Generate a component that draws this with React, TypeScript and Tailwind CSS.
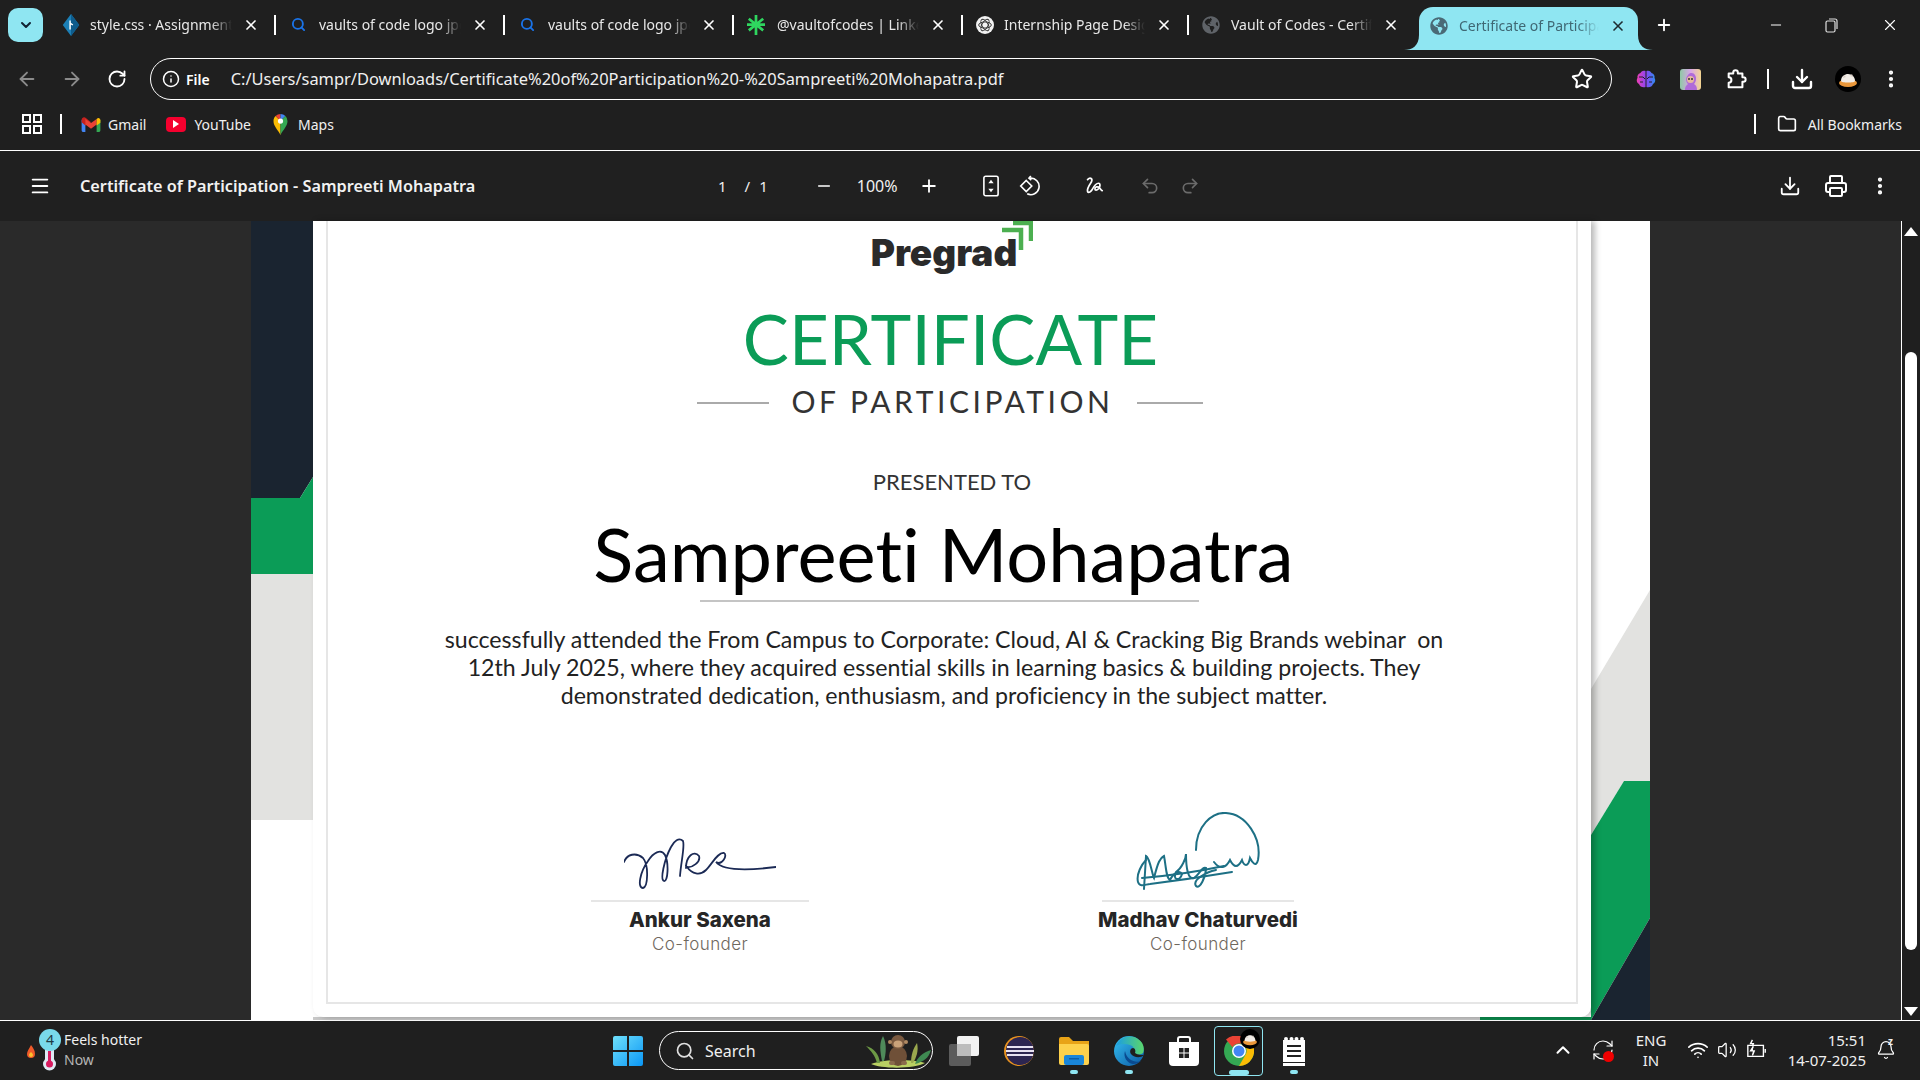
import { ArrowLeft, ArrowRight, Bell, ChevronDown, ChevronUp, Download, EllipsisVertical, Folder, Info, Menu, Minus, Plus, Printer, Redo2, RefreshCw, RotateCw, Search, Star, Undo2, Volume2, Wifi, X } from "lucide-react";
import { FaGlobeAmericas } from "react-icons/fa";

const ui = "font-['Noto_Sans',sans-serif]";

function DiamondIcon() {
  return (
    <svg viewBox="0 0 18 24" className="h-[22px] w-[18px]">
      <path d="M9 0l9 12-9 12-9-12z" fill="#1c7fb6" />
      <path d="M9 0l9 12-9 12z" fill="#0e5c8c" />
      <path d="M8 7v10M8 10l3 2" stroke="#fff" strokeWidth="1.6" fill="none" />
    </svg>
  );
}

function SparkIcon() {
  return (
    <svg viewBox="0 0 20 22" className="h-[22px] w-[18px]">
      <path d="M10 0v22M2 4l16 13M18 4L2 17M0 10.500h20" stroke="#2fd65f" strokeWidth="3" />
    </svg>
  );
}

function GptIcon() {
  return (
    <svg viewBox="0 0 20 20" className="h-5 w-5">
      <circle cx="10" cy="10" r="10" fill="#f2f2f2" />
      <g fill="none" stroke="#333" strokeWidth="1.1">
        <ellipse cx="10" cy="10" rx="7" ry="3.400" />
        <ellipse cx="10" cy="10" rx="7" ry="3.400" transform="rotate(60 10 10)" />
        <ellipse cx="10" cy="10" rx="7" ry="3.400" transform="rotate(120 10 10)" />
      </g>
    </svg>
  );
}

function Tab({ icon, title, textWidth, gapClass }: { icon: React.ReactNode; title: string; textWidth: string; gapClass: string }) {
  return (
    <div className="flex h-full items-center">
      <div className={`flex w-[18px] justify-center ${gapClass}`}>{icon}</div>
      <div className={`overflow-hidden whitespace-nowrap text-[14px] text-[#e8e8e8] [mask-image:linear-gradient(to_right,black_85%,transparent)] ${textWidth}`}>{title}</div>
      <X className="ml-[11px] h-4 w-4 text-white" strokeWidth={2.5} />
      <div className="ml-[15px] mr-[13px] h-[20px] w-[2px] bg-white" />
    </div>
  );
}

function GmailIcon() {
  return (
    <svg viewBox="0 0 20 16" className="h-[15px] w-[20px]">
      <path d="M0 3v11c0 1 .7 2 2 2h2V6z" fill="#4285f4" />
      <path d="M20 3v11c0 1-.7 2-2 2h-2V6z" fill="#34a853" />
      <path d="M0 3c0-2.500 2.800-3.500 4.500-2L10 5.500 4 9 0 5.500z" fill="#c5221f" />
      <path d="M4 2l6 4.500L16 2v6l-6 4.500L4 8z" fill="#ea4335" />
      <path d="M16 2c2-2 4-.5 4 1.500V6l-4 3z" fill="#fbbc04" />
    </svg>
  );
}

function YoutubeIcon() {
  return (
    <div className="flex h-[15px] w-[20px] items-center justify-center rounded-[4px] bg-[#f5002e]">
      <div className="h-0 w-0 border-y-[4px] border-l-[6px] border-y-transparent border-l-white" />
    </div>
  );
}

function MapsIcon() {
  return (
    <svg viewBox="0 0 16 24" className="h-[21px] w-[15px]">
      <path d="M8 24C5 18 0 14 0 8c0-2 .8-4 2.400-5.600L8 8z" fill="#fbbc04" />
      <path d="M2.400 2.400A8 8 0 018 0v8z" fill="#ea4335" />
      <path d="M8 0a8 8 0 015.600 2.400L8 8z" fill="#4285f4" />
      <path d="M13.600 2.400A8 8 0 0116 8c0 6-5 10-8 16V8z" fill="#34a853" />
      <circle cx="8" cy="8" r="3" fill="#fff" />
    </svg>
  );
}

function BrainIcon() {
  return (
    <svg viewBox="0 0 20 20" className="h-5 w-5">
      <defs>
        <linearGradient id="brainFill" x1="0" x2="1">
          <stop offset="0" stopColor="#ef3fb2" />
          <stop offset="0.5" stopColor="#8b45f5" />
          <stop offset="1" stopColor="#2f8cf0" />
        </linearGradient>
      </defs>
      <path d="M9.500 2C7 1 5 2.500 4.500 4 2 4.500 1 7 1.500 9 0 11 1 14 3 15c.5 2.500 4 4 6.500 3zM10.500 2C13 1 15 2.500 15.500 4 18 4.500 19 7 18.500 9c1.500 2 .5 5-1.500 6-.5 2.500-4 4-6.500 3z" fill="url(#brainFill)" />
      <path d="M3 8h4l2 2M17 8h-4l-2 2M4 13h3M16 13h-3" stroke="#20202a" strokeWidth="1" fill="none" />
    </svg>
  );
}

function FaceExtIcon() {
  return (
    <svg viewBox="0 0 21 21" className="h-[21px] w-[21px]">
      <defs>
        <linearGradient id="faceBg" x1="0" x2="1">
          <stop offset="0" stopColor="#8fc9a5" />
          <stop offset="0.5" stopColor="#d9a6e8" />
          <stop offset="1" stopColor="#f3d58f" />
        </linearGradient>
      </defs>
      <rect width="21" height="21" rx="3" fill="url(#faceBg)" />
      <path d="M5 21c0-4 2-5 3-6-2-2-3-6 0-9 2-3 6-2 7 0 2 3 1 7-1 9 2 1 3 3 3 6z" fill="#b06ad9" />
      <circle cx="10.500" cy="10.500" r="3.500" fill="#e8b9a0" />
      <circle cx="9" cy="10" r="1" fill="#333" />
      <circle cx="12" cy="10" r="1" fill="#333" />
    </svg>
  );
}

function PuzzleIcon() {
  return (
    <svg viewBox="0 0 24 24" className="h-[22px] w-[22px]" fill="none" stroke="#fff" strokeWidth="2.200" strokeLinejoin="round">
      <path d="M4 6h5V5a2.500 2.500 0 015 0v1h5v4h1a2.500 2.500 0 010 5h-1v6H4v-5a3 3 0 000-6z" />
    </svg>
  );
}

function CatAvatar({ size }: { size: string }) {
  return (
    <svg viewBox="0 0 26 26" className={size}>
      <circle cx="13" cy="13" r="13" fill="#000" />
      <ellipse cx="13" cy="17" rx="9" ry="4" fill="#e8963a" />
      <path d="M6 15c0-5 4-7 7-7 4 0 7 3 7 7 0 2-14 2-14 0z" fill="#f1ece6" />
      <path d="M8 12l1-3 2 2zM15 10l2-2 1 3z" fill="#d9cfc6" />
    </svg>
  );
}

function FitIcon() {
  return (
    <svg viewBox="0 0 18 24" className="h-[22px] w-[16px]" fill="none">
      <rect x="1" y="1" width="16" height="22" rx="2" stroke="#fff" strokeWidth="1.800" />
      <path d="M9 5l3 4H6zM9 19l-3-4h6z" fill="#fff" />
    </svg>
  );
}

function RotateDiamondIcon() {
  return (
    <svg viewBox="0 0 24 24" className="h-[22px] w-[22px]" fill="none" stroke="#fff" strokeWidth="1.800">
      <path d="M9 6l6 6-6 6-6-6z" />
      <path d="M13 3.500a9 9 0 11-3 17" />
      <path d="M14 1l-2 2.500 2.500 2" />
    </svg>
  );
}

function DrawIcon() {
  return (
    <svg viewBox="0 0 24 24" className="h-[22px] w-[22px]" fill="none" stroke="#fff" strokeWidth="1.900" strokeLinecap="round">
      <path d="M5 5c3-3 6-1 4 3-2 3-5 7-4 10 1 2 4 0 5-2 2-4 4-7 7-7 2 0 2 4 0 6-2 2-4 2-4 0s3-3 5-1c2 2 2 3 3 3" />
    </svg>
  );
}

function ColumnSignatureOne() {
  return (
    <svg viewBox="0 0 152 52" className="h-[52px] w-[152px]" fill="none" stroke="#1b2a55" strokeWidth="1.800" strokeLinecap="round">
      <path d="M0 24C3 16 12 14 19 20C25 27 24 49 19 50C13 50 16 34 24 23C29 15 37 10 41 17C45 25 44 44 40 43C36 42 40 22 47 9C50 3 55 -1 59 3C61 8 57 24 56 38" />
      <path d="M62 30C62 18 70 12 75 18C77 24 68 30 63 29C68 36 76 38 82 32C88 26 94 14 100 15C104 17 98 28 92 24C98 32 120 33 152 29" />
    </svg>
  );
}

function ColumnSignatureTwo() {
  return (
    <svg viewBox="0 0 125 78" className="h-[78px] w-[125px]" fill="none" stroke="#1d7085" strokeWidth="2" strokeLinecap="round">
      <path d="M60 38C60 14 76 0 90 1C110 2 126 26 122 48C120 56 116 50 114 46C112 56 108 54 106 48C102 56 98 56 94 48C90 56 84 58 78 50" />
      <path d="M8 77L10 44C14 46 16 62 18 66C22 50 24 46 28 44C30 54 30 66 34 68C38 60 44 58 46 62C44 70 36 68 40 60C46 56 50 46 50 42C50 56 52 68 58 66C64 62 66 54 70 56C70 64 64 78 60 74C56 68 70 60 80 58" />
      <path d="M2 70C0 62 6 52 10 48M2 70C4 76 10 72 14 72C30 70 60 66 96 60" />
      <path d="M6 66C30 64 60 60 88 54" />
    </svg>
  );
}

function Signatory({ signature, name, lineClass }: { signature: React.ReactNode; name: string; lineClass: string }) {
  return (
    <div className="flex w-[240px] flex-col items-center">
      <div className="flex h-[77px] items-end">{signature}</div>
      <div className={`mt-[10px] h-[2px] bg-[#e6e6e6] ${lineClass}`} />
      <div className="mt-[3px] text-[20.500px] leading-[30px] font-extrabold text-[#262626] font-['Inter',sans-serif]">{name}</div>
      <div className="-mt-[1px] text-[17px] leading-[20px] font-light tracking-[0.4px] text-[#6f685e] font-['Inter',sans-serif]">Co-founder</div>
    </div>
  );
}

function Certificate() {
  return (
    <div className="relative h-full w-[1399px] bg-white">
      <svg viewBox="0 0 1399 799" className="absolute inset-0 h-full w-full">
        <polygon points="0,0 62,0 62,256 49,277 0,277" fill="#1a2430" />
        <polygon points="0,277 49,277 62,256 62,353 0,353" fill="#0b9c57" />
        <rect x="0" y="353" width="62" height="246" fill="#e2e2e0" />
        <polygon points="1340,468 1399,369 1399,560 1373,560 1340,614" fill="#e2e2e0" />
        <polygon points="1373,560 1399,560 1399,697 1340,799 1340,614" fill="#0b9c57" />
        <polygon points="1399,697 1399,799 1340,799" fill="#1a2430" />
        <rect x="62" y="796" width="1167" height="3" fill="#c8c8c8" />
        <rect x="1229" y="796" width="111" height="3" fill="#0b8a4c" />
      </svg>
      <div className="relative ml-[62px] h-[796px] w-[1278px] rounded-b-[10px] bg-white px-[13px] pb-[13px] shadow-[4px_0_6px_rgba(0,0,0,0.28)]">
        <div className="flex h-full flex-col items-center border-x-2 border-b-2 border-[#e6e6e6] font-['Lato',sans-serif] [font-variant-ligatures:none]">
          <div className="relative mr-[16px] mt-[9px] text-[37px] leading-[46px] font-black text-[#2a2a2a] font-['Inter',sans-serif]">
            Pregrad
            <svg viewBox="0 0 32 30" className="absolute left-[130px] top-[-9px] h-[30px] w-[32px]" fill="none" stroke="#4caf50" strokeWidth="4.500">
              <path d="M12 2h18v18" />
              <path d="M1 9h19v20" />
            </svg>
          </div>
          <div className="mr-[3px] mt-[21px] text-[69px] leading-[84px] tracking-[0.1px] text-[#0b9c57]">CERTIFICATE</div>
          <div className="mr-[5px] mt-[1px] flex items-center">
            <div className="mt-[3px] h-[2px] w-[72px] bg-[#aaaaaa]" />
            <div className="mx-[23px] text-[30px] leading-[38px] tracking-[3.550px] text-[#333333]">OF PARTICIPATION</div>
            <div className="mt-[3px] h-[2px] w-[66px] bg-[#aaaaaa]" />
          </div>
          <div className="mt-[47px] text-[22px] leading-[30px] text-[#333333]">PRESENTED TO</div>
          <div className="mr-[17px] mt-[14px] text-[74px] leading-[86px] text-black">Sampreeti Mohapatra</div>
          <div className="mr-[6px] mt-[3px] h-[2px] w-[499px] bg-[#c4c4c4]" />
          <div className="mr-[16px] mt-[23px] whitespace-pre text-center text-[23.150px] leading-[28px] text-[#222222]">
            {"successfully attended the From Campus to Corporate: Cloud, AI & Cracking Big Brands webinar  on\n12th July 2025, where they acquired essential skills in learning basics & building projects. They\ndemonstrated dedication, enthusiasm, and proficiency in the subject matter."}
          </div>
          <div className="mt-[104px] flex gap-[258px] pr-[6px]">
            <Signatory signature={<ColumnSignatureOne />} name="Ankur Saxena" lineClass="w-[218px]" />
            <Signatory signature={<ColumnSignatureTwo />} name="Madhav Chaturvedi" lineClass="w-[192px]" />
          </div>
        </div>
      </div>
    </div>
  );
}

function WeatherIcon() {
  return (
    <div className="relative h-[44px] w-[36px]">
      <svg viewBox="0 0 36 44" className="h-full w-full">
        <path d="M5 16c2 3 4 5 4 9a4 4 0 01-8 0c0-3 2-5 4-9z" fill="#ef5a2a" />
        <path d="M5 23c1 1 2 2 2 3a2 2 0 01-4 0c0-1 1-2 2-3z" fill="#fbc02d" />
        <rect x="19" y="12" width="9" height="24" rx="4.500" fill="#dfeaf5" />
        <circle cx="23.500" cy="35" r="6.500" fill="#dfeaf5" />
        <rect x="22" y="22" width="3" height="12" fill="#d81b60" />
        <circle cx="23.500" cy="35" r="3.500" fill="#d81b60" />
      </svg>
      <div className="absolute left-[13px] top-0 flex h-[22px] w-[22px] items-center justify-center rounded-full bg-[#79d9ea] text-[14px] text-[#1f3a44]">4</div>
    </div>
  );
}

function WindowsLogo() {
  return (
    <svg viewBox="0 0 30 30" className="h-[30px] w-[30px]">
      <defs>
        <linearGradient id="winFill" x1="0" y1="0" x2="1" y2="1">
          <stop offset="0" stopColor="#6fe0fb" />
          <stop offset="1" stopColor="#0a96f5" />
        </linearGradient>
      </defs>
      <path d="M0 2a2 2 0 012-2h12v14H0zM16 0h12a2 2 0 012 2v12H16zM0 16h14v14H2a2 2 0 01-2-2zM16 16h14v12a2 2 0 01-2 2H16z" fill="url(#winFill)" />
    </svg>
  );
}

function MonkeyArt() {
  return (
    <svg viewBox="0 0 66 36" className="h-[38px] w-[66px]">
      <path d="M6 31c14-5 40-5 54-1-10 6-44 6-54 1z" fill="#b9cf63" />
      <path d="M12 30C10 22 6 18 1 13c8 2 13 8 14 17z" fill="#6d9a45" />
      <path d="M17 28C15 18 14 10 18 3c4 8 3 18 1 25z" fill="#4f8a5a" />
      <path d="M46 30c0-8 2-14 6-20 2 8-1 15-4 20z" fill="#9aa84e" />
      <path d="M50 31c2-6 8-12 16-14-2 8-8 12-16 14z" fill="#3f8a52" />
      <ellipse cx="33" cy="23" rx="9" ry="10" fill="#6f5038" />
      <circle cx="33" cy="9" r="7" fill="#7b5a40" />
      <circle cx="25" cy="9" r="2" fill="#b08a62" />
      <circle cx="41" cy="9" r="2" fill="#b08a62" />
      <ellipse cx="33" cy="11" rx="4.500" ry="3.500" fill="#c9a27a" />
      <rect x="24" y="28" width="6" height="4" rx="2" fill="#8a6a4c" />
      <rect x="36" y="28" width="6" height="4" rx="2" fill="#8a6a4c" />
    </svg>
  );
}

function CopyTilesIcon() {
  return (
    <svg viewBox="0 0 30 30" className="h-[30px] w-[30px]">
      <rect x="0" y="8" width="22" height="22" rx="2" fill="#5c5c5c" />
      <rect x="8" y="0" width="22" height="20" rx="2" fill="#f2f2f2" />
      <rect x="8" y="8" width="14" height="12" fill="#bdbdbd" />
    </svg>
  );
}

function EclipseIcon() {
  return (
    <svg viewBox="0 0 30 30" className="h-[30px] w-[30px]">
      <circle cx="15" cy="15" r="15" fill="#e8921f" />
      <circle cx="16" cy="15" r="14" fill="#2c2550" />
      <path d="M3 11h26M2 15h28M3 19h26" stroke="#e6e1f0" strokeWidth="2" />
    </svg>
  );
}

function FolderIcon() {
  return (
    <svg viewBox="0 0 30 28" className="h-[28px] w-[30px]">
      <path d="M0 2a2 2 0 012-2h8l4 4h16v6H0z" fill="#e8a317" />
      <path d="M0 7h28a2 2 0 012 2v17a2 2 0 01-2 2H2a2 2 0 01-2-2z" fill="#fdd14c" />
      <rect x="5" y="18" width="20" height="10" rx="2" fill="#1a86d9" />
      <rect x="10" y="21" width="10" height="1.500" fill="#0b5ea8" />
    </svg>
  );
}

function EdgeIcon() {
  return (
    <svg viewBox="0 0 30 30" className="h-[30px] w-[30px]">
      <defs>
        <linearGradient id="edgeA" x1="0" y1="0" x2="1" y2="1">
          <stop offset="0" stopColor="#35c1f1" />
          <stop offset="1" stopColor="#0c59a4" />
        </linearGradient>
        <linearGradient id="edgeB" x1="0" y1="0" x2="1" y2="0">
          <stop offset="0" stopColor="#1b9de2" />
          <stop offset="1" stopColor="#5bd66a" />
        </linearGradient>
      </defs>
      <circle cx="15" cy="15" r="15" fill="url(#edgeA)" />
      <path d="M2 10C6 1 16-2 24 3c5 3 7 9 5 14-3 2-8 2-10 0 2-3 1-7-3-8-5-2-11-1-14 1z" fill="url(#edgeB)" />
      <path d="M30 19c-4 4-11 2-13-1-2-3 0-6 2-6s3 3 2 5c3 2 6 2 9 2z" fill="#1f1f1f" />
      <path d="M11 15c-2 6 2 12 8 13 3 0 6-1 8-3-5 2-14 0-16-10z" fill="#0a4a8f" />
    </svg>
  );
}

function StoreIcon() {
  return (
    <svg viewBox="0 0 30 30" className="h-[30px] w-[30px]">
      <path d="M9 6V3a2 2 0 012-2h8a2 2 0 012 2v3" fill="none" stroke="#fff" strokeWidth="2" />
      <path d="M0 6h30v20a4 4 0 01-4 4H4a4 4 0 01-4-4z" fill="#fff" />
      <path d="M10 12h4.500v4.500H10zM15.500 12H20v4.500h-4.500zM10 17.500h4.500V22H10zM15.500 17.500H20V22h-4.500z" fill="#222" />
    </svg>
  );
}

function ChromeIcon() {
  return (
    <svg viewBox="0 0 30 30" className="h-[30px] w-[30px]">
      <circle cx="15" cy="15" r="15" fill="#34a853" />
      <path d="M15 0a15 15 0 0113 7.500H15a7.500 7.500 0 00-6.500 3.750L2 3.500A15 15 0 0115 0z" fill="#ea4335" />
      <path d="M28 7.500A15 15 0 0115 30l6.500-11.250A7.500 7.500 0 0021.500 11z" fill="#fbbc04" />
      <circle cx="15" cy="15" r="7" fill="#fff" />
      <circle cx="15" cy="15" r="5.500" fill="#4285f4" />
    </svg>
  );
}

function NotepadIcon() {
  return (
    <svg viewBox="0 0 22 30" className="h-[30px] w-[22px]">
      <path d="M0 4h22v22H0z" fill="#fff" />
      <path d="M0 27h22v3H0z" fill="#fff" />
      <circle cx="3" cy="3" r="2" fill="#fff" />
      <circle cx="8.500" cy="3" r="2" fill="#fff" />
      <circle cx="13.500" cy="3" r="2" fill="#fff" />
      <circle cx="19" cy="3" r="2" fill="#fff" />
      <path d="M4 10h14M4 15h14M4 20h14" stroke="#222" strokeWidth="2" />
    </svg>
  );
}

function TaskCell({ children, dot }: { children: React.ReactNode; dot?: boolean }) {
  return (
    <div className="relative flex h-full w-[55px] items-center justify-center">
      {children}
      {dot && <div className="absolute bottom-[6px] h-[4px] w-[8px] rounded-full bg-[#8fe6f2]" />}
    </div>
  );
}

export default function App() {
  return (
    <div className={`flex h-screen w-[1920px] flex-col overflow-hidden bg-[#1f1f1f] text-white ${ui}`}>
      {/* tab strip */}
      <div className="flex h-[50px] items-end">
        <div className="mb-[8px] ml-[8px] mr-[19px] flex h-[34px] w-[35px] items-center justify-center rounded-[10px] bg-[#8fe6f2]">
          <ChevronDown className="h-4 w-4 text-[#123]" strokeWidth={3} />
        </div>
        <div className="flex h-[50px] items-center pb-[1px]">
          <Tab icon={<DiamondIcon />} title="style.css · Assignment 3" textWidth="w-[142px]" gapClass="mr-[10px]" />
          <Tab icon={<Search className="h-[15px] w-[15px] text-[#1a73e8]" strokeWidth={3} />} title="vaults of code logo jpg" textWidth="w-[142px]" gapClass="mr-[12px]" />
          <Tab icon={<Search className="h-[15px] w-[15px] text-[#1a73e8]" strokeWidth={3} />} title="vaults of code logo jpg" textWidth="w-[142px]" gapClass="mr-[12px]" />
          <Tab icon={<SparkIcon />} title="@vaultofcodes | LinkedIn" textWidth="w-[142px]" gapClass="mr-[12px]" />
          <Tab icon={<GptIcon />} title="Internship Page Design" textWidth="w-[141px]" gapClass="mr-[10px]" />
          <div className="flex h-full items-center">
            <FaGlobeAmericas className="mr-[11px] h-[18px] w-[18px] text-[#5f6368]" />
            <div className="w-[141px] overflow-hidden whitespace-nowrap text-[14px] text-[#e8e8e8] [mask-image:linear-gradient(to_right,black_85%,transparent)]">Vault of Codes - Certificate</div>
            <X className="ml-[11px] h-4 w-4 text-white" strokeWidth={2.5} />
          </div>
        </div>
        <div className="relative ml-[20px] flex h-[43px] w-[219px] items-center rounded-t-[14px] bg-[#8fe6f2] pb-[6px] pl-[11px]">
          <svg viewBox="0 0 15 15" className="absolute -left-[15px] bottom-0 h-[15px] w-[15px]"><path d="M15 0v15H0c8 0 15-4 15-15z" fill="#8fe6f2" /></svg>
          <svg viewBox="0 0 15 15" className="absolute -right-[15px] bottom-0 h-[15px] w-[15px]"><path d="M0 0v15h15C7 15 0 11 0 0z" fill="#8fe6f2" /></svg>
          <FaGlobeAmericas className="mr-[11px] h-[18px] w-[18px] text-[#4a6a76]" />
          <div className="w-[140px] overflow-hidden whitespace-nowrap text-[14px] text-[#3f6874] [mask-image:linear-gradient(to_right,black_85%,transparent)]">Certificate of Participation</div>
          <X className="ml-[11px] h-4 w-4 text-[#1d2b30]" strokeWidth={2.5} />
        </div>
        <Plus className="mb-[16px] ml-[17px] h-[18px] w-[18px] text-white" strokeWidth={2.5} />
        <div className="mb-[16px] ml-auto flex items-center gap-[39px] pr-[21px]">
          <Minus className="h-4 w-4 text-white" strokeWidth={1.5} />
          <svg viewBox="0 0 16 16" className="h-4 w-4" fill="none" stroke="#e0e0e0" strokeWidth="1.200">
            <rect x="3" y="4" width="9" height="11" rx="1.500" />
            <path d="M6 2h6a2 2 0 012 2v8" />
          </svg>
          <X className="ml-[3px] h-[18px] w-[18px] text-white" strokeWidth={1.5} />
        </div>
      </div>

      {/* address row */}
      <div className="flex h-[58px] items-center pl-[16px]">
        <ArrowLeft className="h-[22px] w-[22px] text-[#8b8b8b]" strokeWidth={2} />
        <ArrowRight className="ml-[23px] h-[22px] w-[22px] text-[#8b8b8b]" strokeWidth={2} />
        <RotateCw className="ml-[24px] h-[20px] w-[20px] text-white" strokeWidth={2.2} />
        <div className="ml-[23px] flex h-[42px] w-[1462px] items-center rounded-full border-[1.5px] border-white pl-[11px]">
          <Info className="h-[18px] w-[18px] text-white" strokeWidth={2} />
          <span className="ml-[6px] text-[14px] font-semibold">File</span>
          <span className="ml-[21px] text-[16.450px] text-[#f0f0f0]">C:/Users/sampr/Downloads/Certificate%20of%20Participation%20-%20Sampreeti%20Mohapatra.pdf</span>
          <Star className="ml-auto mr-[18px] h-[22px] w-[22px] text-white" strokeWidth={2.2} />
        </div>
        <div className="ml-[24px]"><BrainIcon /></div>
        <div className="ml-[24px]"><FaceExtIcon /></div>
        <div className="ml-[24px]"><PuzzleIcon /></div>
        <div className="ml-[20px] h-[20px] w-[2px] bg-white" />
        <Download className="ml-[21px] h-[24px] w-[24px] text-white" strokeWidth={2.4} />
        <div className="ml-[21px]"><CatAvatar size="h-[26px] w-[26px]" /></div>
        <EllipsisVertical className="ml-[19px] h-[22px] w-[22px] text-white" strokeWidth={2.6} />
      </div>

      {/* bookmarks */}
      <div className="flex h-[42px] items-center pb-[10px] pl-[22px] text-[14px] text-[#f0f0f0]">
        <svg viewBox="0 0 20 20" className="h-[20px] w-[20px]" fill="none" stroke="#fff" strokeWidth="2">
          <rect x="1" y="1" width="7" height="7" />
          <rect x="12" y="1" width="7" height="7" />
          <rect x="1" y="12" width="7" height="7" />
          <rect x="12" y="12" width="7" height="7" />
        </svg>
        <div className="ml-[18px] h-[20px] w-[2px] bg-white" />
        <div className="ml-[19px] flex items-center gap-[7px]"><GmailIcon /><span>Gmail</span></div>
        <div className="ml-[20px] flex items-center gap-[8px]"><YoutubeIcon /><span>YouTube</span></div>
        <div className="ml-[22px] flex items-center gap-[10px]"><MapsIcon /><span>Maps</span></div>
        <div className="ml-auto h-[20px] w-[2px] bg-white" />
        <Folder className="ml-[21px] h-[20px] w-[20px] text-white" strokeWidth={2} />
        <span className="ml-[11px] mr-[18px]">All Bookmarks</span>
      </div>
      <div className="h-[1px] bg-white" />

      {/* pdf toolbar */}
      <div className="flex h-[70px] items-center bg-[#202020] pl-[29px]">
        <Menu className="h-[22px] w-[22px] text-white" strokeWidth={2} />
        <div className="ml-[29px] w-[600px] pt-[1px] text-[16.250px] font-semibold text-[#f2f2f2]">Certificate of Participation - Sampreeti Mohapatra</div>
        <div className="ml-[38px] flex items-center text-[15px] text-[#f0f0f0]">
          <span>1</span>
          <span className="ml-[18px]">/</span>
          <span className="ml-[9px]">1</span>
        </div>
        <Minus className="ml-[47px] h-[18px] w-[18px] text-white" strokeWidth={2.2} />
        <span className="ml-[24px] text-[16px] text-[#f0f0f0]">100%</span>
        <Plus className="ml-[21px] h-[20px] w-[20px] text-white" strokeWidth={2.2} />
        <div className="ml-[44px]"><FitIcon /></div>
        <div className="ml-[19px]"><RotateDiamondIcon /></div>
        <div className="ml-[43px]"><DrawIcon /></div>
        <Undo2 className="ml-[35px] h-[20px] w-[20px] text-[#6b6b6b]" strokeWidth={2} />
        <Redo2 className="ml-[20px] h-[20px] w-[20px] text-[#6b6b6b]" strokeWidth={2} />
        <Download className="ml-auto h-[22px] w-[22px] text-white" strokeWidth={2} />
        <Printer className="ml-[23px] h-[24px] w-[24px] text-white" strokeWidth={2} />
        <EllipsisVertical className="mr-[29px] ml-[21px] h-[22px] w-[22px] text-white" strokeWidth={2.6} />
      </div>

      {/* viewer */}
      <div className="flex h-[799px]">
        <div className="w-[251px] bg-[#2a2a2a]" />
        <Certificate />
        <div className="w-[251px] bg-[#2a2a2a]" />
        <div className="flex w-[19px] flex-col items-center border-l border-white bg-[#1f1f1f] px-[3px]">
          <div className="mt-[6px] h-0 w-0 border-x-[7px] border-b-[9px] border-x-transparent border-b-white" />
          <div className="mt-[116px] h-[598px] w-[12px] rounded-full bg-white" />
          <div className="mt-[57px] h-0 w-0 border-x-[7px] border-t-[9px] border-x-transparent border-t-white" />
        </div>
      </div>
      <div className="h-[1px] bg-white" />

      {/* taskbar */}
      <div className="flex h-[59px] items-center">
        <div className="flex w-[613px] items-center pl-[26px]">
          <WeatherIcon />
          <div className="mb-[2px] ml-[2px] text-[14px] leading-[20px]">
            <div className="text-[#f0f0f0]">Feels hotter</div>
            <div className="text-[#b5b5b5]">Now</div>
          </div>
        </div>
        <WindowsLogo />
        <div className="ml-[16px] flex h-[39px] w-[274px] items-center rounded-full border-[1.5px] border-white pl-[15px]">
          <Search className="h-[20px] w-[20px] text-[#e0e0e0]" strokeWidth={2} />
          <span className="ml-[10px] text-[16px] text-[#f0f0f0]">Search</span>
          <div className="ml-auto mr-[1px]"><MonkeyArt /></div>
        </div>
        <div className="ml-[3px] flex h-full">
          <TaskCell><CopyTilesIcon /></TaskCell>
          <TaskCell><EclipseIcon /></TaskCell>
          <TaskCell dot><FolderIcon /></TaskCell>
          <TaskCell dot><EdgeIcon /></TaskCell>
          <TaskCell><StoreIcon /></TaskCell>
          <div className="relative flex h-full w-[55px] items-center justify-center">
            <div className="flex h-[50px] w-[49px] items-center justify-center rounded-[4px] border border-[#8fe6f2]">
              <ChromeIcon />
            </div>
            <div className="absolute right-[6px] top-[8px]"><CatAvatar size="h-[20px] w-[20px]" /></div>
            <div className="absolute bottom-[5px] h-[5px] w-[20px] rounded-full bg-[#8fe6f2]" />
          </div>
          <TaskCell dot><NotepadIcon /></TaskCell>
        </div>
        <div className="ml-auto flex h-full items-center pb-[2px] pr-[14px] text-[15px] text-[#f0f0f0]">
          <div className="flex w-[30px] justify-center"><ChevronUp className="h-[22px] w-[22px] text-white" strokeWidth={2.2} /></div>
          <div className="relative flex w-[50px] justify-center">
            <RefreshCw className="h-[24px] w-[24px] text-white" strokeWidth={1.2} />
            <div className="absolute bottom-[0px] left-[25px] h-[11px] w-[11px] rounded-full bg-[#f00000]" />
          </div>
          <div className="flex w-[46px] flex-col items-center leading-[20px]"><span>ENG</span><span>IN</span></div>
          <div className="ml-[6px] flex w-[36px] justify-center"><Wifi className="h-[22px] w-[22px] text-white" strokeWidth={1.8} /></div>
          <div className="flex w-[22px] justify-center"><Volume2 className="h-[20px] w-[20px] text-white" strokeWidth={1.5} /></div>
          <div className="flex w-[38px] justify-center">
            <svg viewBox="0 0 24 24" className="h-[22px] w-[22px]" fill="none" stroke="#fff" strokeWidth="1.500">
              <path d="M2 7h17v12H2zM21 11v4" />
              <path d="M8 8l-3 5h4l-2 5" fill="#fff" />
              <path d="M7 1L5 5h3l-1 3" />
            </svg>
          </div>
          <div className="flex w-[90px] flex-col items-end leading-[20px]"><span>15:51</span><span>14-07-2025</span></div>
          <div className="relative flex w-[40px] justify-center">
            <Bell className="h-[20px] w-[20px] text-white" strokeWidth={1.5} />
            <span className="absolute left-[22px] -top-[6px] text-[10px] font-bold">z</span>
          </div>
        </div>
      </div>
    </div>
  );
}
